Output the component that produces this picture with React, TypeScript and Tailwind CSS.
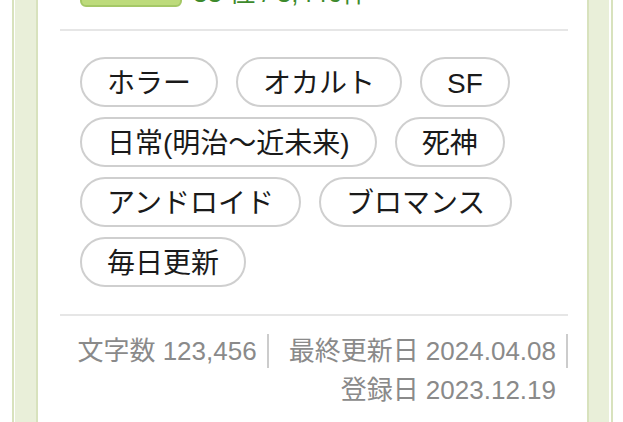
import React from "react";

const tags = [
  "ホラー",
  "オカルト",
  "SF",
  "日常(明治〜近未来)",
  "死神",
  "アンドロイド",
  "ブロマンス",
  "毎日更新",
];

const font = { fontFamily: '"Liberation Sans", "Noto Sans CJK JP", sans-serif' };

export default function App() {
  return (
    <div className="bg-white h-[422px] pl-[12px] pr-[10px] overflow-hidden flex flex-col" style={font}>
      <div className="flex-1 flex flex-col border-x-2 border-[#d8e2bd]">
        <div className="flex-1 flex flex-col border-l border-r-2 border-white bg-[#e9efd9] pl-[21px] pr-[20px]">
          <div className="flex-1 flex flex-col border-x-2 border-[#d8e2bd] bg-white pl-[22px] pr-[19px]">
            {/* top row (cut off) */}
            <div className="flex items-end gap-[11px] -mt-[33px] pl-[20px]">
              <div className="w-[102px] h-[40px] rounded-[6px] border-2 border-[#a5c866] bg-[#bddb7b]" />
              <div className="text-[26px] leading-[30px] text-[#3d8a2c] mb-[-1px]">33 位 / 3,446件</div>
            </div>
            <div className="mt-[22px] h-[2px] bg-[#e6e6e6]" />
            <div className="flex flex-wrap gap-x-[18px] gap-y-[10px] pl-[20px] pt-[26px] pb-[27px]">
              {tags.map((t) => (
                <div
                  key={t}
                  className="h-[50px] flex items-center px-[25px] pt-[3px] border-2 border-[#cfcfcf] rounded-full text-[28px] text-[#1a1a1a] whitespace-nowrap"
                >
                  {t}
                </div>
              ))}
            </div>
            <div className="h-[2px] bg-[#e6e6e6]" />
            <div className="flex flex-wrap justify-end gap-y-[5px] pt-[18px] text-[26px] leading-[34px] text-[#8a8a8a]">
              <div className="pr-[10px] border-r-2 border-[#cccccc] whitespace-nowrap">文字数 123,456</div>
              <div className="ml-[10px] pl-[10px] pr-[10px] border-r-2 border-[#cccccc] whitespace-nowrap">最終更新日 2024.04.08</div>
              <div className="ml-[10px] pl-[10px] pr-[10px] border-r-2 border-transparent whitespace-nowrap">登録日 2023.12.19</div>
            </div>
          </div>
        </div>
      </div>
    </div>
  );
}
